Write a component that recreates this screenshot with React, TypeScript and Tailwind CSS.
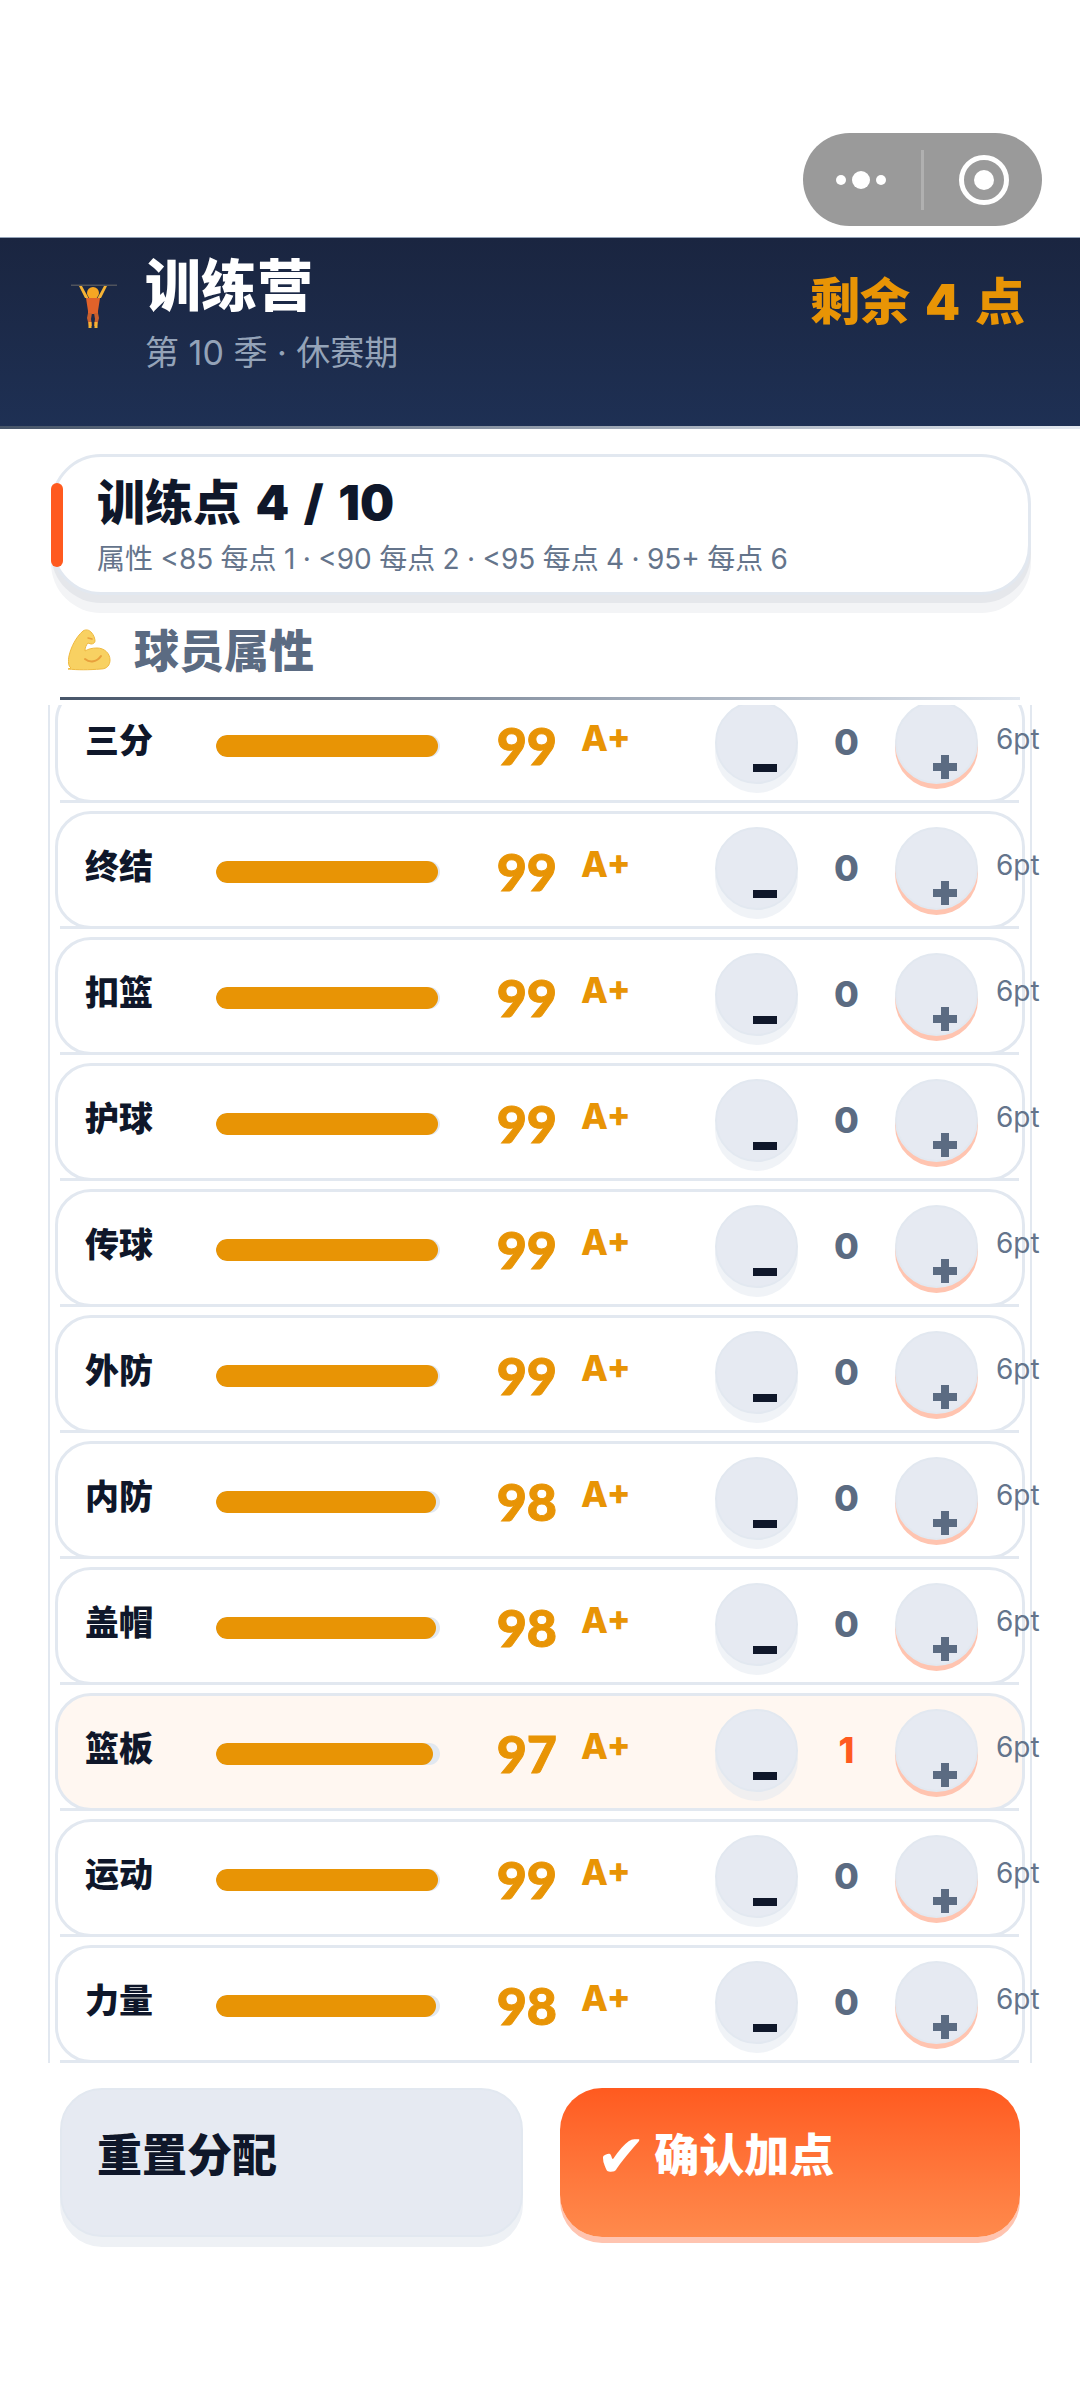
import React from "react";

type Stat = { name: string; value: number; points: number };

const stats: Stat[] = [
  { name: "三分", value: 99, points: 0 },
  { name: "终结", value: 99, points: 0 },
  { name: "扣篮", value: 99, points: 0 },
  { name: "护球", value: 99, points: 0 },
  { name: "传球", value: 99, points: 0 },
  { name: "外防", value: 99, points: 0 },
  { name: "内防", value: 98, points: 0 },
  { name: "盖帽", value: 98, points: 0 },
  { name: "篮板", value: 97, points: 1 },
  { name: "运动", value: 99, points: 0 },
  { name: "力量", value: 98, points: 0 },
];

const LifterIcon = () => (
  <svg width="48" height="46" viewBox="0 0 48 46">
    <rect x="1" y="1.5" width="46" height="1.5" fill="#4f535c" />
    <path d="M9 3l6 12h3.5L12 3zM37 3l-6 12h-3.5L34 3z" fill="#f5b335" />
    <circle cx="23" cy="10" r="6" fill="#f6a623" />
    <path d="M16 15h14l-2 13v3H18v-3z" fill="#e0622a" />
    <path d="M18 30h4l-1 6 1 7h-3l-2-8zM28 30h-4l1 6-1 7h3l2-8z" fill="#c9602e" />
    <rect x="18.5" y="39" width="3" height="6" fill="#f5b335" />
    <rect x="24.5" y="39" width="3" height="6" fill="#f5b335" />
  </svg>
);

const MuscleIcon = () => (
  <svg width="44" height="42" viewBox="0 0 44 42">
    <path
      d="M3 39C0 37 0 32 1 27 3 18 8 8 15 2c3-2 6-1 8 1 3 3 4 7 4 9 0 2-2 3-4 3l-3-1c-2 2-3 5-3 8 3-2 7-3 12-3 7 0 13 5 13 12 0 5-3 9-9 9-12 1-24 1-33 0z"
      fill="#f8d162"
      stroke="#efb93f"
      strokeWidth="1"
    />
    <path d="M17 30c5 4 12 3 16-3" fill="none" stroke="#e8a03c" strokeWidth="2" strokeLinecap="round" />
    <path d="M20 9l4 1" stroke="#e8a03c" strokeWidth="1.5" strokeLinecap="round" />
  </svg>
);

const StatRow = ({ stat }: { stat: Stat }) => {
  const active = stat.points > 0;
  return (
    <div
      className={`relative h-[118px] shrink-0 rounded-[36px] border-[3px] border-[#e2e8f0] flex items-start pl-[27px] after:absolute after:left-[2px] after:right-[3px] after:bottom-[-3px] after:h-[3px] after:bg-[#e2e8f0] ${
        active ? "bg-[#fff7f1]" : "bg-white"
      }`}
    >
      <div className="w-[131px] shrink-0 mt-[30px] text-[34px] leading-[46px] font-black text-[#0f172a]">{stat.name}</div>
      <div className="w-[224px] shrink-0 h-[22px] mt-[47px] rounded-full bg-[#e2e8f0] overflow-hidden">
        <div className="h-full rounded-full bg-[#e89405]" style={{ width: `${stat.value}%` }} />
      </div>
      <div className="w-[117px] shrink-0 mt-[25px] text-right font-['Lato'] text-[52px] leading-[64px] font-black text-[#e89405] [-webkit-text-stroke:1px_#e89405]">
        {stat.value}
      </div>
      <div className="ml-[24px] w-[134px] shrink-0 mt-[28px] text-[35px] leading-[44px] font-extrabold text-[#e89405]">A+</div>
      <button className="relative w-[83px] h-[83px] shrink-0 mt-[13px] rounded-full border-2 border-[#e2e8f0] bg-[#e6eaf2] shadow-[0_9px_0_rgba(226,232,240,0.5)]">
        <span className="absolute left-[36px] top-[61px] w-[24px] h-[8px] bg-[#0f172a]" />
      </button>
      <div className={`w-[97px] shrink-0 mt-[29px] text-center text-[36px] leading-[50px] font-extrabold ${active ? "text-[#ff5a1f]" : "text-[#5b6b82]"}`}>
        {stat.points}
      </div>
      <button className="relative w-[83px] h-[83px] shrink-0 mt-[13px] rounded-full border-2 border-[#e2e8f0] bg-[#e6eaf2] shadow-[0_5px_0_#ffc4b0]">
        <span className="absolute left-[36px] top-[60px] w-[24px] h-[8px] bg-[#5b6b82]" />
        <span className="absolute left-[44px] top-[52px] w-[8px] h-[24px] bg-[#5b6b82]" />
      </button>
      <div className="ml-[18px] shrink-0 mt-[31px] text-[28px] leading-[40px] text-[#64748b]">6pt</div>
    </div>
  );
};

export default function App() {
  return (
    <div
      className="w-[1080px] h-[2400px] bg-white overflow-hidden"
      style={{ fontFamily: 'Inter, "Noto Sans CJK SC", sans-serif' }}
    >
      {/* capsule */}
      <div className="h-[237px] flex justify-end items-start pt-[133px] pr-[38px]">
        <div className="w-[239px] h-[93px] rounded-full bg-[#9a9a9a] flex items-center">
          <div className="w-[118px] flex items-center justify-end gap-[6px] pr-[35px]">
            <span className="w-[10px] h-[10px] rounded-full bg-white" />
            <span className="w-[18px] h-[18px] rounded-full bg-white" />
            <span className="w-[10px] h-[10px] rounded-full bg-white" />
          </div>
          <div className="w-[3px] h-[60px] bg-[#b0b0b0]" />
          <div className="ml-[35px] w-[50px] h-[50px] rounded-full border-[5px] border-white flex items-center justify-center">
            <span className="w-[20px] h-[20px] rounded-full bg-white" />
          </div>
        </div>
      </div>

      {/* header */}
      <div className="relative h-[192px] border-t border-[#94a3b8] bg-gradient-to-b from-[#1a2540] to-[#1e3054] flex items-start pl-[70px] pr-[55px]">
        <div className="w-[75px] mt-[45px]">
          <LifterIcon />
        </div>
        <div className="flex-1 -mt-[1px]">
          <div className="mt-[20px] text-[56px] leading-[58px] font-black text-white">训练营</div>
          <div className="mt-[16px] text-[34px] leading-[44px] text-[#94a3b8]">第 10 季 · 休赛期</div>
        </div>
        <div className="mt-[38px] text-[50px] leading-[52px] font-black text-[#e89405] [word-spacing:5px]">剩余 4 点</div>
        <div className="absolute left-0 right-0 bottom-0 h-[3px] bg-gradient-to-r from-[#475569] to-[#e2e8f0]" />
      </div>

      {/* training points */}
      <div className="relative ml-[51px] w-[980px] mt-[25px] h-[141px] rounded-[50px] border-[3px] border-[#e2e8f0] bg-white shadow-[0_8px_0_#e5e7eb,0_18px_0_#f3f4f6] pl-[43px]">
        <div className="absolute -left-[3px] top-[26px] w-[12px] h-[84px] rounded-full bg-[#ff5a1f]" />
        <div className="mt-[18px] text-[48px] leading-[56px] font-black text-[#0f172a] [word-spacing:5px]">训练点 4 / 10</div>
        <div className="mt-[10px] text-[28px] leading-[36px] text-[#64748b] [word-spacing:-0.5px]">属性 &lt;85 每点 1 · &lt;90 每点 2 · &lt;95 每点 4 · 95+ 每点 6</div>
      </div>

      {/* section title */}
      <div className="mt-[32px] ml-[68px] h-[70px] flex items-start gap-[22px]">
        <div className="mt-[2px]">
          <MuscleIcon />
        </div>
        <div className="text-[45px] leading-[50px] font-black text-[#5b6b82]">球员属性</div>
      </div>
      <div className="ml-[60px] w-[960px] h-[3px] bg-gradient-to-r from-[#475569] to-[#e2e8f0]" />

      {/* stat list */}
      <div className="flow-root mt-[5px] ml-[48px] w-[984px] h-[1358px] border-x-2 border-[#e2e8f0] overflow-x-visible overflow-y-clip px-[5px]">
        <div className="-mt-[20px] flex flex-col gap-[8px]">
          {stats.map((stat) => (
            <StatRow key={stat.name} stat={stat} />
          ))}
        </div>
      </div>

      {/* actions */}
      <div className="mt-[25px] px-[60px] flex gap-[37px]">
        <button className="flex-1 h-[149px] rounded-[42px] border-2 border-[#e2e8f0] bg-[#e6eaf2] shadow-[0_10px_0_#eef1f5] pb-[14px] pl-[35px] text-left text-[45px] font-black text-[#0f172a]">
          重置分配
        </button>
        <button className="flex-1 h-[149px] rounded-[42px] bg-gradient-to-b from-[#ff5a1f] to-[#ff8a4c] shadow-[0_6px_0_#ffc4b0] pb-[14px] pl-[36px] flex items-center gap-[8px] text-[45px] font-black text-white">
          <span className="text-[60px] leading-none" style={{ fontFamily: '"DejaVu Sans", sans-serif' }}>✔</span>
          <span>确认加点</span>
        </button>
      </div>
    </div>
  );
}
